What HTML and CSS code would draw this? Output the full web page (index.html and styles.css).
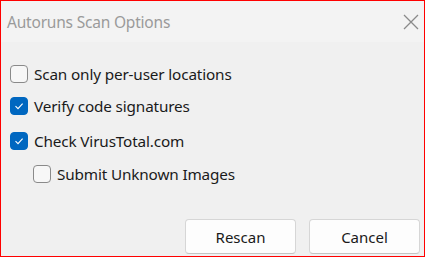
FILE: index.html
```html
<!DOCTYPE html>
<html lang="en">
<head>
  <meta charset="UTF-8" />
  <title>Autoruns Scan Options</title>
  <link rel="stylesheet" href="styles.css">
</head>
<body>
  <div class="dialog">
    <div class="titlebar">
      <span class="title">Autoruns Scan Options</span>
      <svg class="close" width="16" height="16" viewBox="0 0 16 16">
        <path d="M1 1 L15 15 M15 1 L1 15" stroke="#8a8a8a" stroke-width="1.3" fill="none" />
      </svg>
    </div>

    <div class="options">
      <label class="option">
        <span class="box"></span>
        Scan only per-user locations
      </label>
      <label class="option">
        <span class="box checked"><svg width="12" height="12" viewBox="0 0 12 12"><path d="M2.5 6.2 L5 8.6 L9.6 3.6" stroke="#fff" stroke-width="1.1" fill="none" /></svg></span>
        Verify code signatures
      </label>
      <label class="option gap-big">
        <span class="box checked"><svg width="12" height="12" viewBox="0 0 12 12"><path d="M2.5 6.2 L5 8.6 L9.6 3.6" stroke="#fff" stroke-width="1.1" fill="none" /></svg></span>
        Check VirusTotal.com
      </label>
      <label class="option sub">
        <span class="box"></span>
        Submit Unknown Images
      </label>
    </div>

    <div class="buttons">
      <button>Rescan</button>
      <button>Cancel</button>
    </div>
  </div>
</body>
</html>
```

FILE: styles.css
```css
html, body {
  margin: 0;
  padding: 0;
}

body {
  font-family: 'Noto Sans', 'Open Sans', sans-serif;
  background: #f0f0f0;
  color: #1a1a1a;
}

.dialog {
  width: 425px;
  height: 257px;
  box-sizing: border-box;
  border: 1px solid #ff0000;
  background: #f0f0f0;
  display: flex;
  flex-direction: column;
}

.titlebar {
  height: 41px;
  background: #f3f3f3;
  display: flex;
  align-items: center;
  justify-content: space-between;
  padding: 1px 4px 0 6px;
  box-sizing: border-box;
  flex-shrink: 0;
}

.title {
  font-size: 15.5px;
  color: #9a9a9a;
  letter-spacing: -0.2px;
}

.close {
  margin-right: 1px;
}

.options {
  display: flex;
  flex-direction: column;
  padding: 22px 0 0 9px;
  gap: 12px;
}

.option {
  display: flex;
  align-items: center;
  gap: 6px;
  font-size: 15.3px;
  height: 20px;
  letter-spacing: -0.15px;
}

.option.gap-big {
  margin-top: 3px;
}

.option.sub {
  margin-left: 23px;
  margin-top: 1px;
}

.box {
  width: 18px;
  height: 18px;
  box-sizing: border-box;
  border: 1px solid #8a8a8a;
  border-radius: 4px;
  background: #f7f7f7;
  display: flex;
  align-items: center;
  justify-content: center;
  flex-shrink: 0;
}

.box.checked {
  background: #0067c0;
  border-color: #0067c0;
}

.buttons {
  margin-top: auto;
  display: flex;
  justify-content: flex-end;
  gap: 13px;
  padding: 0 4px 2px 0;
}

.buttons button {
  width: 111px;
  height: 35px;
  background: #fdfdfd;
  border: 1px solid #d6d6d6;
  border-bottom-color: #c4c4c4;
  border-radius: 4px;
  font-family: 'Noto Sans', 'Open Sans', sans-serif;
  font-size: 15px;
  color: #1a1a1a;
}
```
